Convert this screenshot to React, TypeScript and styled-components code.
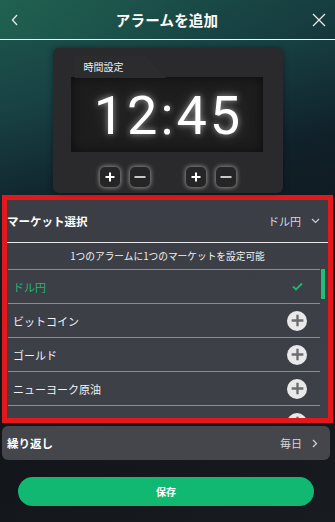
import React from "react";
import styled, { createGlobalStyle } from "styled-components";

const GlobalStyle = createGlobalStyle`
  html, body { margin: 0; padding: 0; }
  body {
    font-family: "Noto Sans CJK JP", "Noto Sans", sans-serif;
    background: #111418;
  }
  * { box-sizing: border-box; }
`;

const Page = styled.div`
  width: 335px;
  height: 522px;
  overflow: hidden;
  display: flex;
  flex-direction: column;
  background: linear-gradient(165deg, #1e594c 0%, #184244 18%, #10212a 36%, #101519 58%, #13161a 80%, #181b20 100%);
  color: #fff;
`;

const Header = styled.header`
  height: 40px;
  flex: none;
  display: flex;
  align-items: center;
  justify-content: space-between;
  padding: 0 8px 0 7px;
  border-bottom: 1px solid #f2f2f2;
  background: linear-gradient(90deg, rgba(34, 104, 84, 0.55) 0%, rgba(20, 60, 64, 0.2) 60%, rgba(16, 40, 48, 0.3) 100%);
`;

const IconBtn = styled.span`
  width: 16px;
  height: 16px;
  display: flex;
  align-items: center;
  justify-content: center;
`;

const Title = styled.h1`
  margin: 0;
  font-size: 14.5px;
  font-weight: 700;
  color: #fff;
  letter-spacing: 0.2px;
`;

const ClockArea = styled.div`
  display: flex;
  justify-content: center;
  padding-top: 8px;
  flex: none;
`;

const ClockPanel = styled.div`
  position: relative;
  width: 230px;
  height: 145px;
  background: #2a2a2c;
  border-radius: 6px;
  padding: 0 20px 0 18px;
  display: flex;
  flex-direction: column;
  box-shadow: 0 0 6px rgba(0, 0, 0, 0.4);
  overflow: hidden;
  &::before {
    content: "";
    position: absolute;
    left: 22px;
    top: 8px;
    width: 92px;
    height: 22px;
    background: #2c2c2e;
    clip-path: polygon(0 0, 78% 0, 100% 100%, 0 100%);
  }
`;

const ClockLabel = styled.div`
  position: relative;
  font-size: 10px;
  line-height: 13px;
  color: #f0f0f0;
  padding: 12px 0 4px 13px;
`;

const Display = styled.div`
  height: 75px;
  background: #1d1d1e;
  display: flex;
  align-items: center;
  justify-content: center;
  box-shadow: inset 0 0 12px rgba(0, 0, 0, 0.6);
`;

const Digits = styled.div`
  font-family: Roboto, "Liberation Sans", sans-serif;
  font-size: 54px;
  font-weight: 400;
  letter-spacing: 3px;
  line-height: 1;
  color: #fff;
  padding-left: 4px;
  padding-top: 2px;
  text-shadow: 0 0 6px rgba(255, 255, 255, 0.55), 0 0 18px rgba(255, 255, 255, 0.18);
`;

const StepRow = styled.div`
  display: flex;
  justify-content: center;
  gap: 36px;
  margin-top: 15px;
  padding-left: 2px;
`;

const StepGroup = styled.div`
  display: flex;
  gap: 10px;
`;

const StepBtn = styled.button`
  width: 20px;
  height: 20px;
  padding: 0;
  border: none;
  border-radius: 5px;
  background: #252526;
  box-shadow: 0 0 4px 1px rgba(255, 255, 255, 0.45);
  display: flex;
  align-items: center;
  justify-content: center;
`;

const MarketBox = styled.section`
  margin: 2px 2px 0 2px;
  height: 228px;
  flex: none;
  border: 5px solid #e2191c;
  background: linear-gradient(180deg, #3c3e46 0%, #3e4048 100%);
  display: flex;
  flex-direction: column;
  overflow: hidden;
`;

const MarketHead = styled.div`
  height: 43px;
  flex: none;
  display: flex;
  align-items: center;
  justify-content: space-between;
  padding: 0 8px 0 0;
  border-bottom: 1px solid #e8e8e8;
`;

const SectionTitle = styled.span`
  font-size: 11.5px;
  font-weight: 700;
  color: #fff;
`;

const HeadValue = styled.span`
  display: flex;
  align-items: center;
  gap: 10px;
  font-size: 11px;
  color: #d8d8da;
`;

const Note = styled.div`
  height: 26px;
  flex: none;
  display: flex;
  align-items: center;
  justify-content: center;
  font-size: 9.7px;
  color: #f0f0f0;
`;

const ListWrap = styled.div`
  flex: 1;
  display: flex;
  min-height: 0;
`;

const List = styled.ul`
  list-style: none;
  margin: 0 0 0 1px;
  padding: 0;
  flex: 1;
  border-top: 1px solid #8c8d92;
`;

const Item = styled.li<{ $active?: boolean }>`
  height: 34px;
  display: flex;
  align-items: center;
  justify-content: space-between;
  padding: 0 13px 0 5px;
  border-bottom: 1px solid #8c8d92;
  font-size: 11px;
  color: ${(p) => (p.$active ? "#1fb877" : "#f2f2f2")};
`;

const PlusCircle = styled.span`
  width: 20px;
  height: 20px;
  border-radius: 50%;
  background: #e9e9ea;
  display: flex;
  align-items: center;
  justify-content: center;
`;

const Check = styled.span`
  width: 20px;
  display: flex;
  justify-content: center;
`;

const ScrollTrack = styled.div`
  width: 8px;
  flex: none;
  padding-left: 1px;
`;

const ScrollThumb = styled.div`
  width: 4px;
  height: 30px;
  background: #1fbf78;
`;

const RepeatRow = styled.div`
  margin: 3px 5px 0 2px;
  height: 34px;
  flex: none;
  border-radius: 6px;
  background: #44464c;
  display: flex;
  align-items: center;
  justify-content: space-between;
  padding: 0 12px 0 5px;
`;

const SaveButton = styled.button`
  margin: 17px 0 0 18px;
  width: 296px;
  height: 29px;
  flex: none;
  border: none;
  border-radius: 15px;
  background: #10b872;
  color: #fff;
  font-family: "Noto Sans CJK JP", sans-serif;
  font-size: 10px;
  font-weight: 700;
`;

const Plus = ({ size = 10, color = "#fff", w = 2 }: { size?: number; color?: string; w?: number }) => (
  <svg width={size} height={size} viewBox="0 0 10 10">
    <path d="M5 0.5V9.5M0.5 5H9.5" stroke={color} strokeWidth={w} />
  </svg>
);

const Minus = () => (
  <svg width="12" height="10" viewBox="0 0 12 10">
    <path d="M0.5 5H11.5" stroke="#fff" strokeWidth="1.6" />
  </svg>
);

const markets = ["ビットコイン", "ゴールド", "ニューヨーク原油", ""];

export default function App() {
  return (
    <>
      <GlobalStyle />
      <Page>
        <Header>
          <IconBtn>
            <svg width="8" height="12" viewBox="0 0 8 12">
              <path d="M6 1L1.5 6L6 11" stroke="#e8e8e8" strokeWidth="1.3" fill="none" />
            </svg>
          </IconBtn>
          <Title>アラームを追加</Title>
          <IconBtn>
            <svg width="14" height="14" viewBox="0 0 14 14">
              <path d="M1 1L13 13M13 1L1 13" stroke="#e8e8e8" strokeWidth="1.3" />
            </svg>
          </IconBtn>
        </Header>

        <ClockArea>
          <ClockPanel>
            <ClockLabel>時間設定</ClockLabel>
            <Display>
              <Digits>12:45</Digits>
            </Display>
            <StepRow>
              <StepGroup>
                <StepBtn aria-label="時+"><Plus /></StepBtn>
                <StepBtn aria-label="時-"><Minus /></StepBtn>
              </StepGroup>
              <StepGroup>
                <StepBtn aria-label="分+"><Plus /></StepBtn>
                <StepBtn aria-label="分-"><Minus /></StepBtn>
              </StepGroup>
            </StepRow>
          </ClockPanel>
        </ClockArea>

        <MarketBox>
          <MarketHead>
            <SectionTitle>マーケット選択</SectionTitle>
            <HeadValue>
              ドル円
              <svg width="9" height="6" viewBox="0 0 9 6">
                <path d="M1 1L4.5 4.5L8 1" stroke="#cfcfd2" strokeWidth="1.2" fill="none" />
              </svg>
            </HeadValue>
          </MarketHead>
          <Note>1つのアラームに1つのマーケットを設定可能</Note>
          <ListWrap>
            <List>
              <Item $active>
                ドル円
                <Check>
                  <svg width="11" height="9" viewBox="0 0 11 9">
                    <path d="M1 4.5L4 7.5L10 1.5" stroke="#1fb877" strokeWidth="1.8" fill="none" />
                  </svg>
                </Check>
              </Item>
              {markets.map((m, i) => (
                <Item key={i}>
                  <span>{m}</span>
                  <PlusCircle>
                    <Plus size={13} color="#6c6d70" w={1.8} />
                  </PlusCircle>
                </Item>
              ))}
            </List>
            <ScrollTrack>
              <ScrollThumb />
            </ScrollTrack>
          </ListWrap>
        </MarketBox>

        <RepeatRow>
          <SectionTitle>繰り返し</SectionTitle>
          <HeadValue>
            毎日
            <svg width="6" height="9" viewBox="0 0 6 9">
              <path d="M1 1L4.5 4.5L1 8" stroke="#d0d0d3" strokeWidth="1.3" fill="none" />
            </svg>
          </HeadValue>
        </RepeatRow>

        <SaveButton>保存</SaveButton>
      </Page>
    </>
  );
}
